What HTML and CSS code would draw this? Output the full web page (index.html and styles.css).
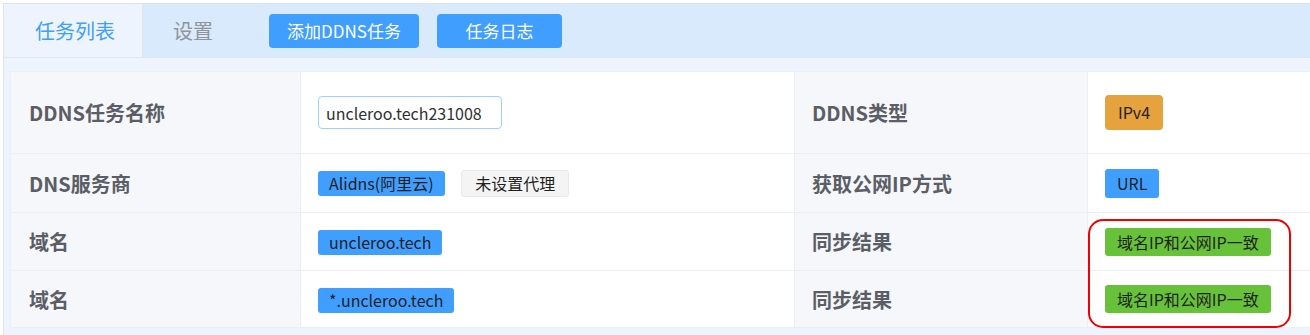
FILE: index.html
```html
<!DOCTYPE html>
<html lang="zh-CN">
  <head>
    <meta charset="UTF-8" />
    <meta name="viewport" content="width=device-width, initial-scale=1.0" />
    <title>DDNS任务列表</title>
    <link rel="stylesheet" href="styles.css">
  </head>
  <body>
    <div class="panel">
      <div class="tabs">
        <div class="tab active">任务列表</div>
        <div class="tab">设置</div>
        <button class="btn btn-add" type="button">添加DDNS任务</button>
        <button class="btn btn-log" type="button">任务日志</button>
      </div>

      <div class="content">
        <table class="info">
          <colgroup>
            <col class="c1" />
            <col class="c2" />
            <col class="c3" />
            <col class="c4" />
          </colgroup>
          <tr class="row1">
            <th>DDNS任务名称</th>
            <td><input class="name-input" type="text" value="uncleroo.tech231008" /></td>
            <th>DDNS类型</th>
            <td><span class="tag tag-orange">IPv4</span></td>
          </tr>
          <tr class="row2">
            <th>DNS服务商</th>
            <td>
              <span class="tag tag-blue">Alidns(阿里云)</span>
              <span class="tag tag-gray">未设置代理</span>
            </td>
            <th>获取公网IP方式</th>
            <td><span class="tag tag-blue tag-url">URL</span></td>
          </tr>
          <tr class="row3">
            <th>域名</th>
            <td><span class="tag tag-blue">uncleroo.tech</span></td>
            <th>同步结果</th>
            <td><span class="tag tag-green">域名IP和公网IP一致</span></td>
          </tr>
          <tr class="row4">
            <th>域名</th>
            <td><span class="tag tag-blue">*.uncleroo.tech</span></td>
            <th>同步结果</th>
            <td><span class="tag tag-green">域名IP和公网IP一致</span></td>
          </tr>
        </table>

        <!-- annotation around the sync results -->
        <div class="mark"></div>
      </div>
    </div>
  </body>
</html>
```

FILE: styles.css
```css
body {
  margin: 0;
  overflow: hidden;
  background: #ffffff;
  font-family: "Noto Sans CJK SC", "Noto Sans", sans-serif;
}

.panel {
  margin: 3px 0 0 3px;
  width: 1340px;
  height: 340px;
  background: #edf4fe;
  border: 1px solid #dce3ec;
}

.tabs {
  display: flex;
  align-items: center;
  height: 53px;
  background: #d9eafc;
  border-bottom: 1px solid #dfe6ee;
}

.tab {
  height: 100%;
  display: flex;
  align-items: center;
  padding: 0 30px;
  font-size: 20px;
  color: #909399;
  white-space: nowrap;
}

.tab.active {
  padding: 0 27px 0 31px;
  background: #edf4fe;
  color: #409eff;
  border-right: 1px solid #dfe6ee;
}

.btn {
  height: 34px;
  margin-left: 26px;
  background-color: #409eff;
  color: white;
  border: none;
  border-radius: 4px;
  font-family: inherit;
  font-size: 17px;
  white-space: nowrap;
  cursor: pointer;
}

.btn-add {
  width: 150px;
}

.btn-log {
  width: 125px;
  margin-left: 18px;
}

.content {
  position: relative;
  padding: 13px 0 0 6px;
}

.info {
  border-collapse: collapse;
  table-layout: fixed;
  width: 1330px;
  border: 1px solid #dcdfe6;
  background: #ffffff;
}

.c1 { width: 290px; }
.c2 { width: 494px; }
.c3 { width: 293px; }
.c4 { width: 253px; }

.info th,
.info td {
  border: 1px solid #ebeef5;
  padding: 0 0 0 17px;
  text-align: left;
  vertical-align: middle;
}

.info th {
  background: #f5f7fa;
  color: #5b5e66;
  font-size: 20px;
  font-weight: bold;
}

.info th:first-child {
  padding-left: 18px;
}

.row1 { height: 82px; }
.row2 { height: 59px; }
.row3 { height: 58px; }
.row4 { height: 57px; }

.name-input {
  width: 184px;
  height: 33px;
  box-sizing: border-box;
  border: 1px solid #a0cfff;
  border-radius: 4px;
  padding: 0 7px;
  font-family: inherit;
  font-size: 16px;
  color: #303133;
}

.tag {
  display: inline-block;
  height: 25px;
  line-height: 25px;
  padding: 0 11px;
  border-radius: 3px;
  font-size: 16px;
  color: #1f1f1f;
  vertical-align: middle;
}

.tag-blue {
  background: #409eff;
}

.tag-gray {
  height: 25px;
  line-height: 25px;
  margin-left: 13px;
  padding: 0 13px;
  background: #f4f4f5;
  border: 1px solid #e9e9eb;
}

.tag-orange {
  height: 35px;
  line-height: 35px;
  padding: 0 13px;
  background: #e6a23c;
  border-radius: 4px;
}

.tag-url {
  height: 29px;
  line-height: 29px;
  padding: 0 12px;
}

.tag-green {
  height: 28px;
  line-height: 28px;
  padding: 0 12px;
  background: #67c23a;
  font-size: 16px;
}

.mark {
  position: absolute;
  left: 1084px;
  top: 161px;
  width: 199px;
  height: 105px;
  border: 2px solid #f00000;
  border-radius: 15px;
}
```
